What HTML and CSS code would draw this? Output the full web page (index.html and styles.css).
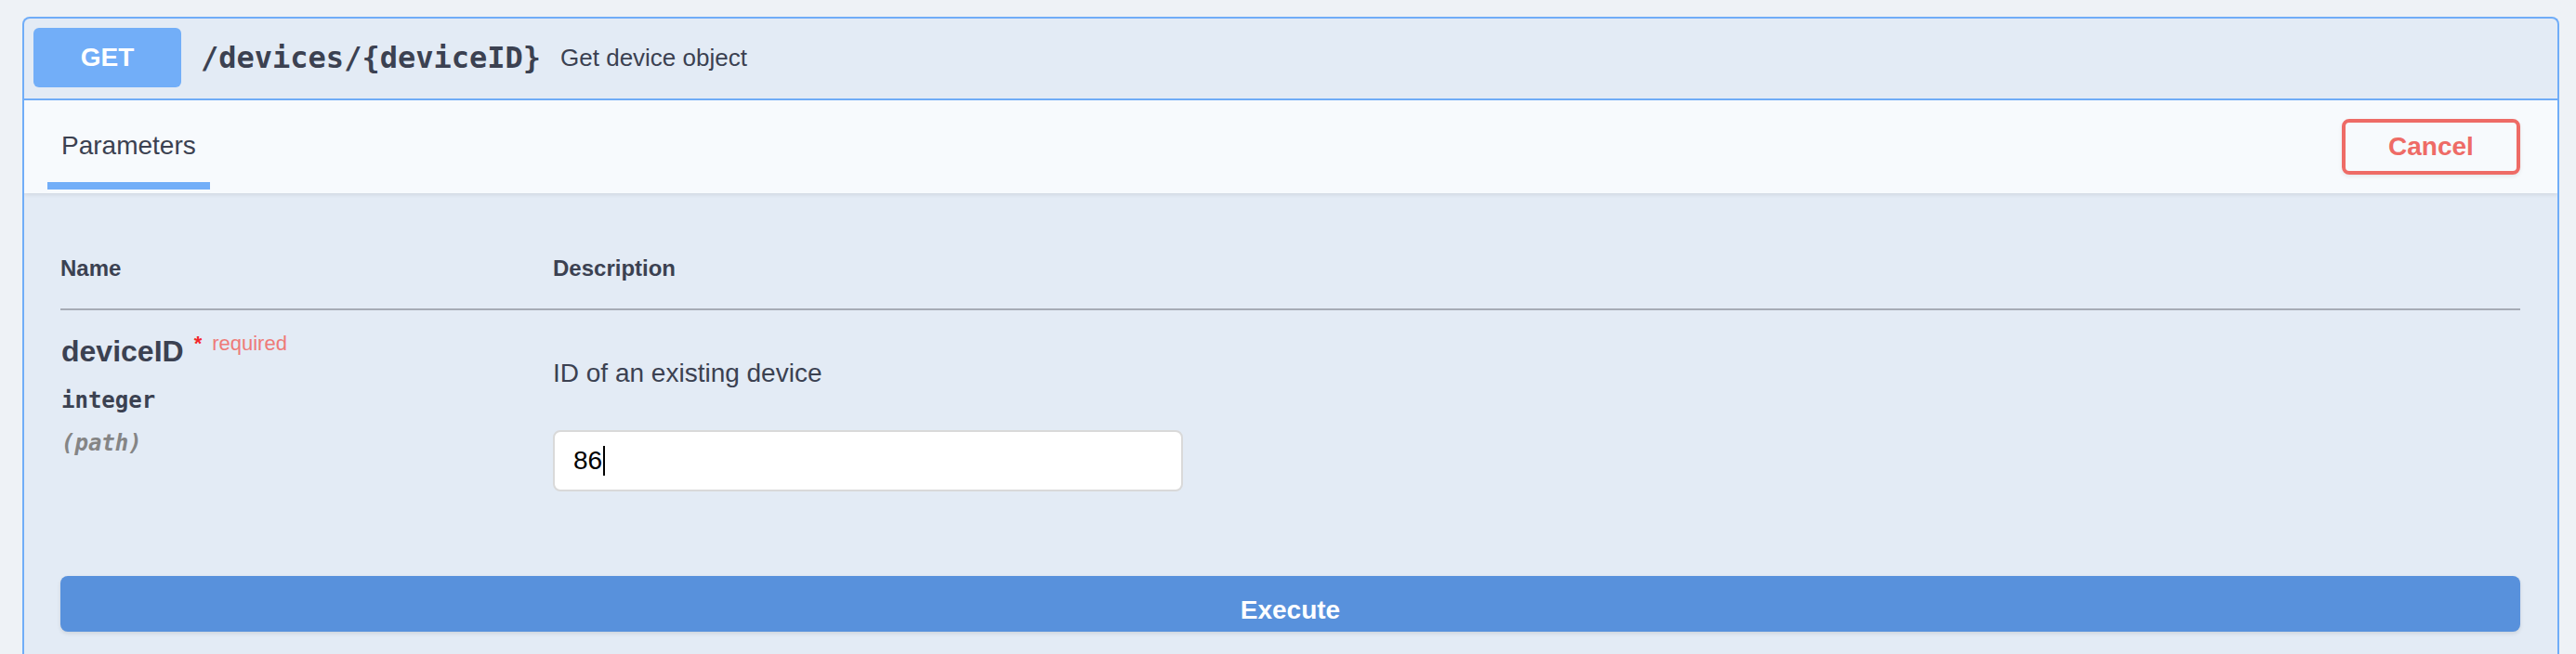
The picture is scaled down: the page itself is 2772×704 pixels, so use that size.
FILE: index.html
```html
<!DOCTYPE html>
<html lang="en">
<head>
<meta charset="utf-8">
<title>GET /devices/{deviceID}</title>
<link rel="stylesheet" href="styles.css">
</head>
<body>
<div class="opblock">
  <div class="summary">
    <span class="method">GET</span>
    <span class="path">/devices/{deviceID}</span>
    <span class="summary-desc">Get device object</span>
  </div>
  <div class="section-header">
    <div class="tab-item">Parameters</div>
    <button class="btn-cancel">Cancel</button>
  </div>
  <div class="section-body">
    <div class="params-head">
      <div class="col-name th">Name</div>
      <div class="col-desc th">Description</div>
    </div>
    <div class="param-row">
      <div class="col-name">
        <div class="param-name">deviceID<span class="star">*</span><span class="required">required</span></div>
        <div class="param-type">integer</div>
        <div class="param-in">(path)</div>
      </div>
      <div class="col-desc">
        <div class="param-desc">ID of an existing device</div>
        <div class="input"><span class="value">86</span><span class="caret"></span></div>
      </div>
    </div>
    <div class="execute">Execute</div>
  </div>
</div>
</body>
</html>
```
FILE: styles.css
```css
html, body {
  margin: 0;
  padding: 0;
}
body {
  background: #eef2f6;
  padding: 18px 18px 0 24px;
  font-family: "Liberation Sans", Arial, sans-serif;
  color: #3b4151;
  overflow: hidden;
  height: 704px;
  box-sizing: border-box;
}
.opblock {
  background: #e3ebf5;
  border: 2px solid #70adf8;
  border-bottom: none;
  border-radius: 8px 8px 0 0;
  height: 686px;
  box-sizing: border-box;
  overflow: hidden;
}
.summary {
  display: flex;
  align-items: center;
  padding: 10px 10px 12px 10px;
  border-bottom: 2px solid #70adf8;
}
.method {
  display: block;
  width: 159px;
  height: 64px;
  line-height: 64px;
  text-align: center;
  background: #72aef8;
  color: #fff;
  font-weight: bold;
  font-size: 28px;
  border-radius: 6px;
}
.path {
  font-family: "DejaVu Sans Mono", monospace;
  font-weight: bold;
  font-size: 32px;
  padding: 0 21px 0 21px;
  color: #3b4151;
}
.summary-desc {
  font-size: 26px;
  color: #3b4151;
}
.section-header {
  display: flex;
  justify-content: space-between;
  align-items: center;
  height: 100px;
  padding: 0 40px 0 25px;
  background: #f7fafd;
  box-shadow: 0 2px 4px rgba(0, 0, 0, 0.08);
  position: relative;
}
.tab-item {
  align-self: flex-end;
  margin-bottom: 4px;
  padding: 0 15px 23px;
  font-size: 28px;
  line-height: 32px;
  border-bottom: 8px solid #72aef8;
}
.btn-cancel {
  font-family: "Liberation Sans", Arial, sans-serif;
  font-weight: bold;
  font-size: 28px;
  line-height: 32px;
  color: #ee6b66;
  background: transparent;
  border: 4px solid #ee6b66;
  border-radius: 8px;
  padding: 10px 46px;
  width: 192px;
  box-shadow: 0 2px 4px rgba(0, 0, 0, 0.08);
}
.section-body {
  padding: 65px 40px 0 39px;
}
.params-head {
  display: flex;
  border-bottom: 2px solid #a6abb5;
  padding-bottom: 27px;
}
.th {
  font-weight: bold;
  font-size: 24px;
  line-height: 32px;
}
.col-name {
  width: 530px;
  flex: none;
}
.col-desc {
  flex: 1;
}
.param-row {
  display: flex;
}
.param-row .col-name {
  padding-top: 16px;
}
.param-name {
  font-weight: bold;
  font-size: 32px;
  line-height: 40px;
  padding-left: 1px;
}
.star {
  color: #f4262a;
  font-size: 22px;
  vertical-align: 12px;
  margin-left: 11px;
}
.required {
  color: #ee7a78;
  font-size: 22px;
  font-weight: normal;
  vertical-align: 12px;
  margin-left: 11px;
}
.param-type {
  font-family: "DejaVu Sans Mono", monospace;
  font-weight: bold;
  font-size: 24px;
  line-height: 32px;
  margin-top: 17px;
  padding-left: 1px;
}
.param-in {
  font-family: "DejaVu Sans Mono", monospace;
  font-style: italic;
  font-weight: bold;
  font-size: 24px;
  line-height: 32px;
  color: #858585;
  margin-top: 14px;
  padding-left: 1px;
}
.param-row .col-desc {
  padding-top: 50px;
}
.param-desc {
  font-size: 28px;
  line-height: 36px;
}
.input {
  margin-top: 43px;
  width: 678px;
  height: 66px;
  box-sizing: border-box;
  background: #fff;
  border: 2px solid #d9d9d9;
  border-radius: 8px;
  padding: 0 20px;
  display: flex;
  align-items: center;
  font-size: 28px;
  color: #000;
}
.caret {
  display: block;
  width: 2px;
  height: 32px;
  background: #000;
  margin-left: 1px;
}
.execute {
  margin-top: 91px;
  height: 60px;
  box-sizing: border-box;
  padding-top: 14px;
  line-height: 46px;
  background: #5891dc;
  color: #fff;
  font-weight: bold;
  font-size: 28px;
  text-align: center;
  border-radius: 8px;
  box-shadow: 0 2px 4px rgba(0, 0, 0, 0.1);
}
```
